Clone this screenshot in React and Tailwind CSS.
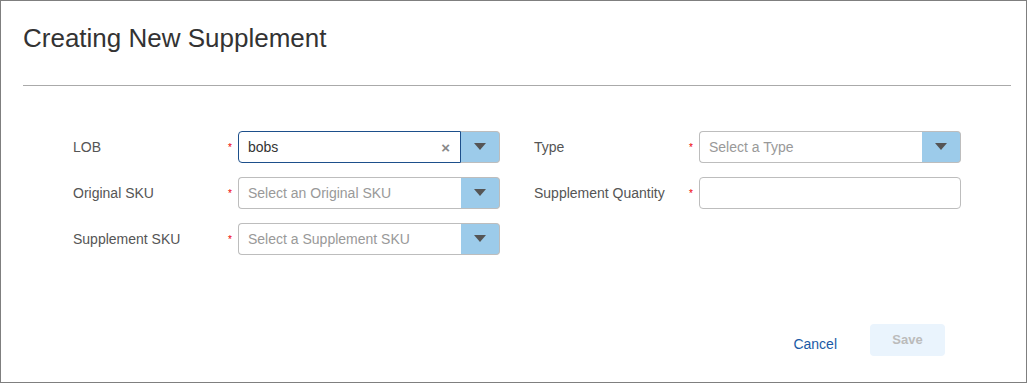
import React from "react";

function Caret() {
  return (
    <svg width="12" height="8" viewBox="0 0 12 8">
      <path d="M0 0 H12 L6 7 Z" fill="#555" />
    </svg>
  );
}

function SelectBox({ value, placeholder, focused }) {
  return (
    <div className="flex h-[32px] w-[262px]">
      <div
        className={
          focused
            ? "flex flex-1 items-center rounded-l-[4px] border border-[#1d4f8b] pl-[9px] pr-[10px]"
            : "flex flex-1 items-center rounded-l-[4px] border border-r-0 border-[#bdbdbd] pl-[9px] pr-[10px]"
        }
      >
        {value ? (
          <span className="flex-1 text-[14px] text-[#333]">{value}</span>
        ) : (
          <span className="flex-1 text-[14px] text-[#999]">{placeholder}</span>
        )}
        {value && <span className="text-[15px] font-bold leading-none text-[#888]">×</span>}
      </div>
      <div className="flex w-[39px] items-center justify-center rounded-r-[4px] border border-l-0 border-[#bdbdbd] bg-[#9ccbea]">
        <Caret />
      </div>
    </div>
  );
}

function Field({ label, children }) {
  return (
    <div className="flex h-[32px] items-center">
      <div className="w-[155px] pt-[1px] text-[14px] text-[#555]">{label}</div>
      <div className="w-[10px] text-[10px] text-[#e00]">*</div>
      {children}
    </div>
  );
}

export default function App() {
  return (
    <div
      className="flex h-[383px] w-[1027px] flex-col border border-[#7f7f7f] bg-white"
      style={{ fontFamily: '"Liberation Sans", Arial, sans-serif' }}
    >
      <div className="mx-[22px] mr-[15px] border-b border-[#aaa] pt-[19px] pb-[29px]">
        <h1 className="text-[26px] leading-[36px] text-[#333]">Creating New Supplement</h1>
      </div>
      <div className="grid grid-cols-[427px_427px] gap-x-[34px] gap-y-[14px] pt-[45px] pl-[72px]">
        <Field label="LOB">
          <SelectBox value="bobs" focused />
        </Field>
        <Field label="Type">
          <SelectBox placeholder="Select a Type" />
        </Field>
        <Field label="Original SKU">
          <SelectBox placeholder="Select an Original SKU" />
        </Field>
        <Field label="Supplement Quantity">
          <input className="h-[32px] w-[262px] rounded-[4px] border border-[#bdbdbd] px-[9px] text-[14px] outline-none" />
        </Field>
        <Field label="Supplement SKU">
          <SelectBox placeholder="Select a Supplement SKU" />
        </Field>
      </div>
      <div className="mt-auto flex items-center justify-end gap-[33px] pr-[81px] pb-[26px]">
        <button className="pt-[8px] text-[14px] text-[#1a5aa6]">Cancel</button>
        <button className="h-[32px] w-[75px] rounded-[4px] bg-[#eaf4fd] text-[13px] font-bold text-[#bbb]">
          Save
        </button>
      </div>
    </div>
  );
}
